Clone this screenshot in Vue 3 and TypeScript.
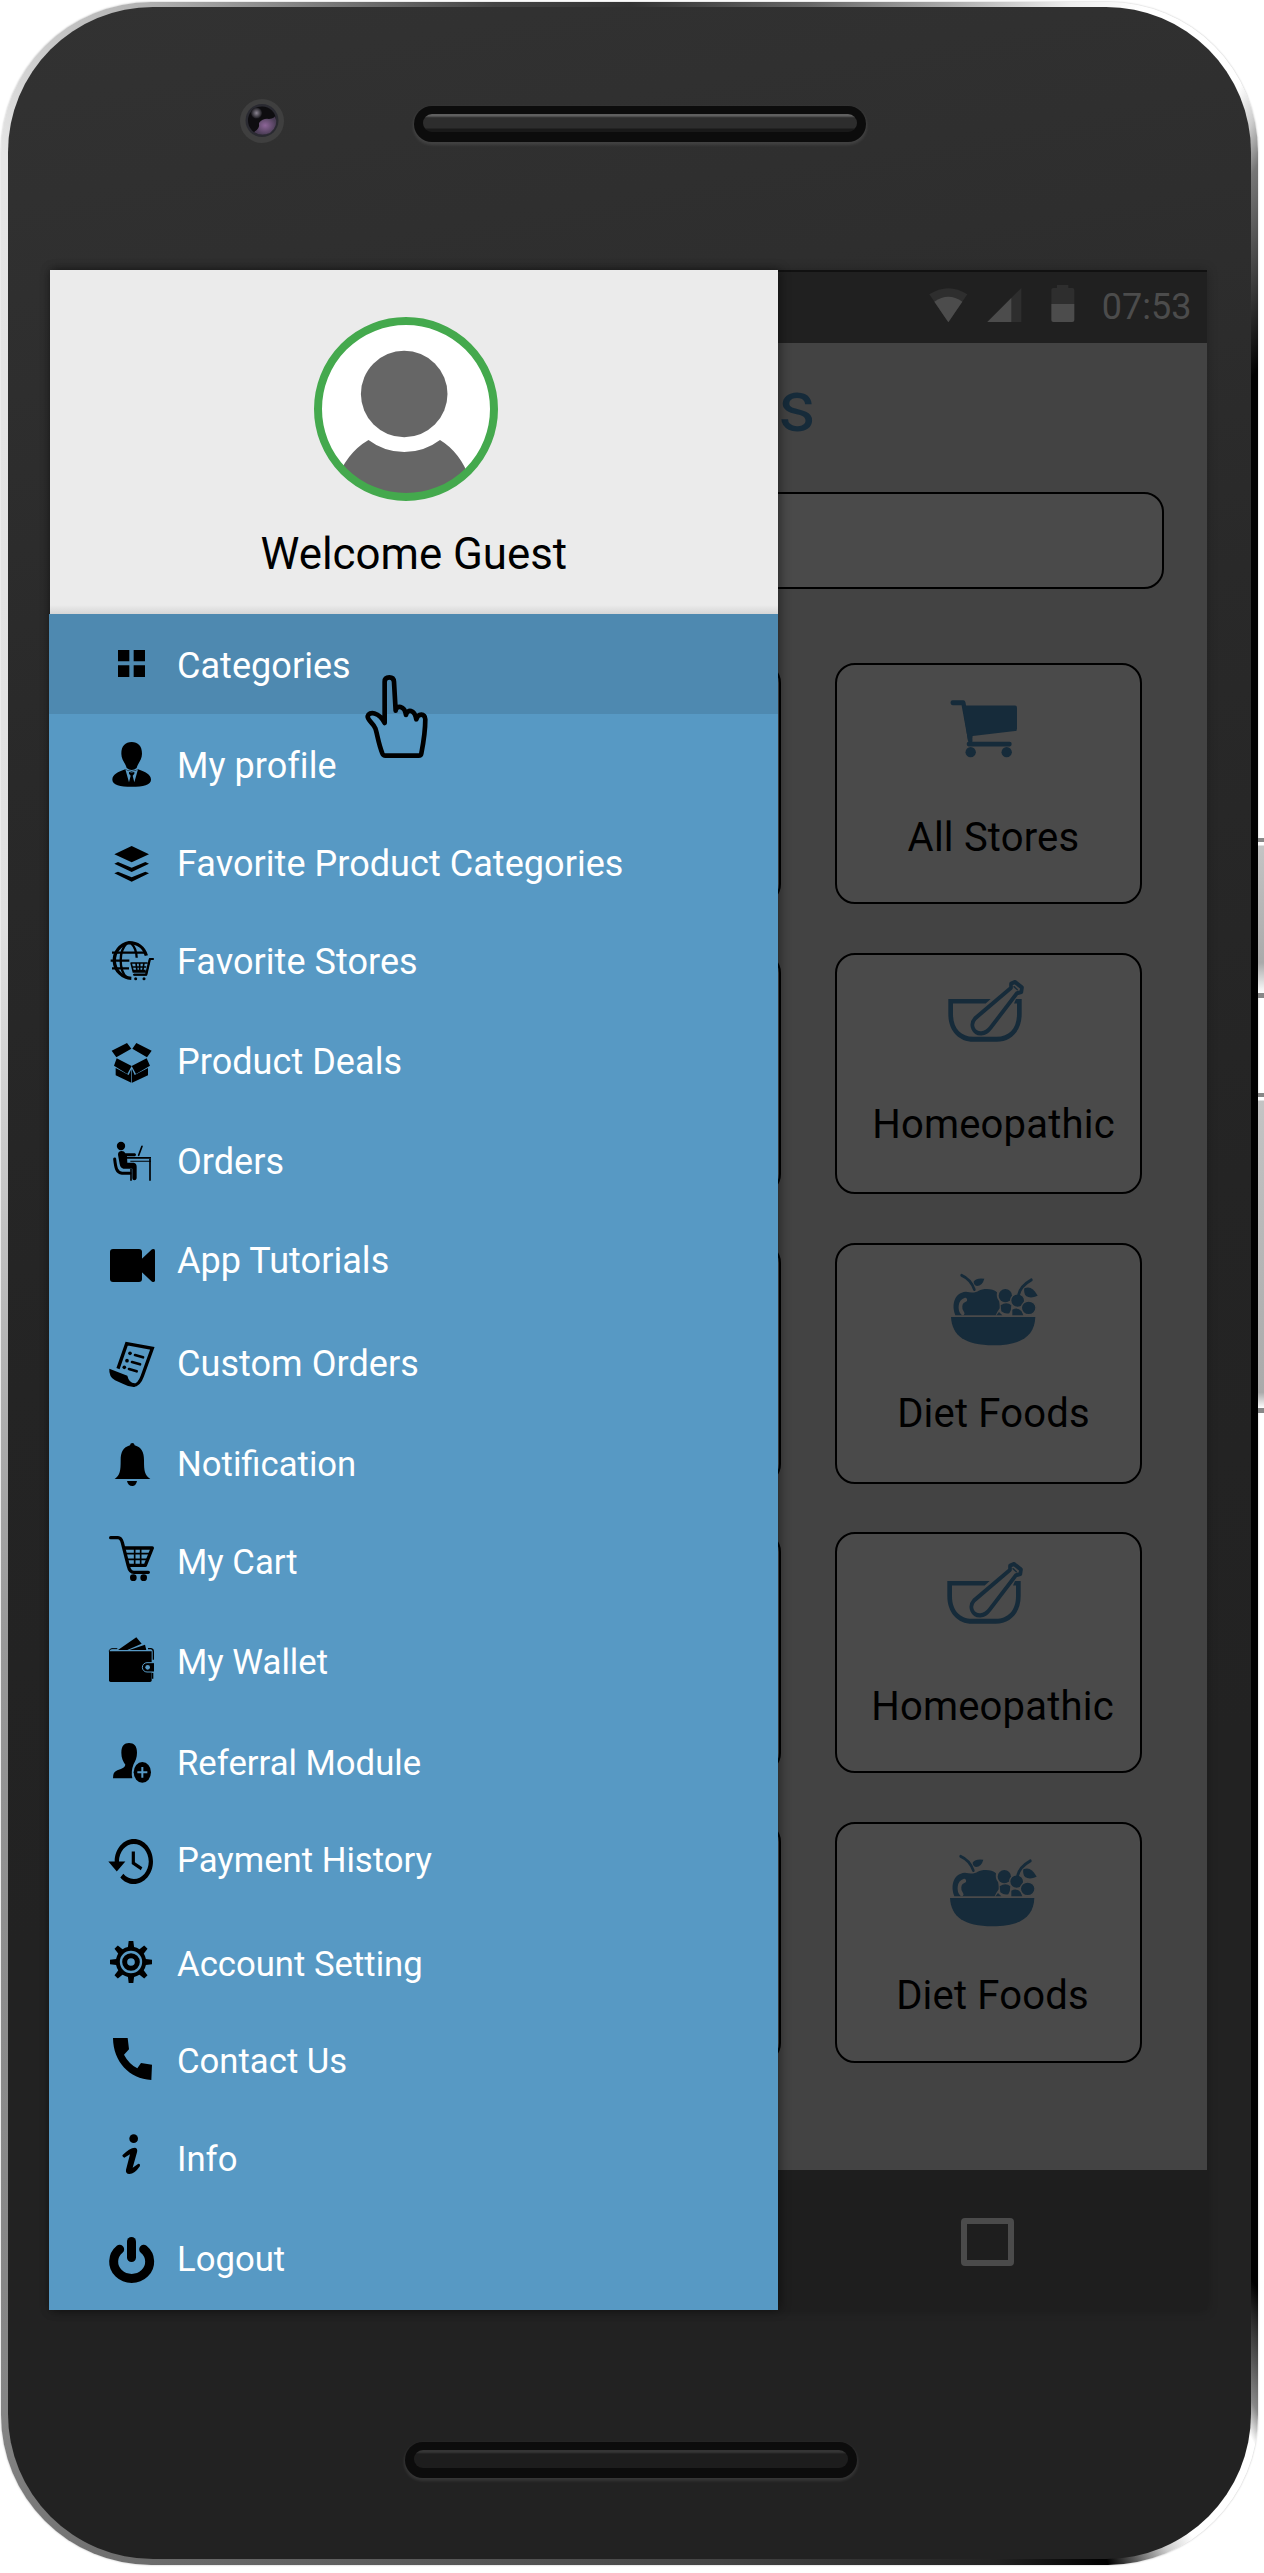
<script setup lang="ts">
interface MenuItem {
  label: string
  icon: string
  height: number
  top: number
}

interface StoreCard {
  label: string
  icon: 'cart' | 'mortar' | 'fruit'
  viewBox: string
  iconTop: number
  iconLeft: number
  textTop: number
}

// `top` is the origin of each icon's own drawing area, `height` the row height
const menu: MenuItem[] = [
  { label: 'Categories', icon: 'grid', height: 100, top: 12 },
  { label: 'My profile', icon: 'profile', height: 98, top: 312 },
  { label: 'Favorite Product Categories', icon: 'layers', height: 98, top: 606 },
  { label: 'Favorite Stores', icon: 'globe', height: 100, top: 900 },
  { label: 'Product Deals', icon: 'box', height: 100, top: 0 },
  { label: 'Orders', icon: 'desk', height: 99, top: 300 },
  { label: 'App Tutorials', icon: 'video', height: 103, top: 597 },
  { label: 'Custom Orders', icon: 'scroll', height: 99, top: 906 },
  { label: 'Notification', icon: 'bell', height: 98, top: 3 },
  { label: 'My Cart', icon: 'cart', height: 100, top: 297 },
  { label: 'My Wallet', icon: 'wallet', height: 101, top: 597 },
  { label: 'Referral Module', icon: 'referral', height: 97, top: 900 },
  { label: 'Payment History', icon: 'history', height: 104, top: -159 },
  { label: 'Account Setting', icon: 'gear', height: 97, top: 153 },
  { label: 'Contact Us', icon: 'phone', height: 98, top: 444 },
  { label: 'Info', icon: 'info', height: 100, top: 738 },
  { label: 'Logout', icon: 'power', height: 104, top: 1038 },
]

const cards: StoreCard[] = [
  { label: 'All Stores', icon: 'cart', viewBox: '540 125.4 300 235.2', iconTop: 23, iconLeft: 103, textTop: 36 },
  { label: 'Homeopathic', icon: 'mortar', viewBox: '540 883.3 300 235.2', iconTop: 23, iconLeft: 103, textTop: 33 },
  { label: 'Diet Foods', icon: 'fruit', viewBox: '540 122.8 300 235.2', iconTop: 23, iconLeft: 103, textTop: 32 },
  { label: 'Homeopathic', icon: 'mortar', viewBox: '540 883.3 300 235.2', iconTop: 25.5, iconLeft: 102, textTop: 33 },
  { label: 'Diet Foods', icon: 'fruit', viewBox: '540 122.8 300 235.2', iconTop: 25, iconLeft: 102, textTop: 33 },
]

const gearTeeth = [0, 45, 90, 135, 180, 225, 270, 315]
</script>

<template>
  <div class="stage">
    <div class="frame">
      <div class="body">
        <div class="bezel-top">
          <svg class="camera" viewBox="0 0 46 46">
            <defs>
              <radialGradient id="lensPurple"><stop offset="0" stop-color="#8d6598" /><stop offset="1" stop-color="#4a3d55" /></radialGradient>
              <radialGradient id="lensShine"><stop offset="0" stop-color="#8b8592" /><stop offset="1" stop-color="#1b1a1f" /></radialGradient>
            </defs>
            <circle cx="23" cy="23" r="22" fill="#3f3f3f" />
            <circle cx="23" cy="22.500" r="16.500" fill="#2a2a31" />
            <circle cx="23" cy="22.500" r="14" fill="#0e0d10" />
            <path d="M15 34Q21 31 20 25Q24 20 30 21Q36 20 36 18Q40 28 31 35Q22 39 15 34Z" fill="url(#lensPurple)" />
            <circle cx="17.500" cy="15" r="5.500" fill="url(#lensShine)" />
          </svg>
          <div class="speaker upper"><i /></div>
        </div>

        <div class="screen">
          <header class="status">
            <svg class="status-icons" viewBox="500 60 450 140">
              <path d="M507 103Q564 66 621 103L564 187Z" fill="#2e2e2e" />
              <path d="M522 125Q564 96 606 125L564 187Z" fill="#4c4c4c" />
              <path d="M783 84V186H681Z" fill="#2e2e2e" />
              <path d="M753 114V186H681Z" fill="#4c4c4c" />
              <path d="M890 75H924V84H936Q942 84 942 90V132H873V90Q873 84 879 84H890Z" fill="#2e2e2e" />
              <path d="M873 132H942V180Q942 186 936 186H879Q873 186 873 180Z" fill="#4c4c4c" />
            </svg>
            <span class="clock">07:53</span>
          </header>

          <main class="page">
            <h1 class="title">s</h1>
            <div class="search" />
            <div class="rows">
              <div v-for="(card, i) in cards" :key="i" class="card-row">
                <div class="card" />
                <div class="card">
                  <svg
                    class="card-icon"
                    :viewBox="card.viewBox"
                    preserveAspectRatio="none"
                    :style="{ marginTop: card.iconTop + 'px', marginLeft: card.iconLeft + 'px' }"
                  >
                    <g v-if="card.icon === 'cart'">
                      <path d="M578 164H610L631 264" class="ln" stroke-width="13" />
                      <path d="M608 171H765Q771 171 771 177V231Q771 238 765 238L638 251L636 264H624Z" />
                      <path d="M626 272H749" class="ln" stroke-width="12" />
                      <ellipse cx="632" cy="293" rx="15.500" ry="13.500" />
                      <ellipse cx="740" cy="293" rx="15.500" ry="13.500" />
                    </g>
                    <g v-else-if="card.icon === 'mortar'">
                      <path d="M565 938H692L677 950H579V978C579 1014 602 1037 640 1037H710C748 1037 771 1014 771 978V950H762L768 938H785V978C785 1020 755 1050 710 1050H640C595 1050 565 1020 565 978Z" />
                      <path d="M753 909L645 989C628 1006 641 1029 664 1028Q680 1027 692 1013L771 923L784 920L786 908L765 894L753 898Z" class="ln" stroke-width="11" />
                      <path d="M762 906L772 914" class="ln" stroke-width="4" />
                    </g>
                    <g v-else>
                      <path d="M573 251H826C824 300 785 325 700 325C615 325 576 300 573 251Z" />
                      <path d="M586 246C575 222 580 188 618 185C638 189 650 186 656 182C671 175 699 176 711 186Q708 200 717 209Q719 214 719 228Q711 238 707 246Z" />
                      <path d="M616 206C598 211 598 232 608 241" fill="none" stroke="#4a4a4a" stroke-width="11" stroke-linecap="round" />
                      <path d="M605 142Q632 152 643 179" class="ln" stroke-width="8" />
                      <path d="M641 158Q650 148 673 151Q667 170 651 170Q641 168 641 158Z" />
                      <path d="M709 246L717 238L727 246Z" />
                      <path d="M722 220Q740 210 754 220Q754 233 748 241Q736 244 724 236Z" />
                      <path d="M757 246L757 232Q772 224 785 236L790 246Z" />
                      <ellipse cx="736" cy="195" rx="20" ry="17" />
                      <ellipse cx="773" cy="208" rx="21" ry="18" stroke="#4a4a4a" stroke-width="4" />
                      <ellipse cx="806" cy="227" rx="22" ry="18" stroke="#4a4a4a" stroke-width="4" />
                      <path d="M776 192Q782 170 814 154" class="ln" stroke-width="8" />
                      <path d="M793 176Q815 166 833 195Q812 204 798 196Q790 188 793 176Z" />
                    </g>
                  </svg>
                  <div class="card-label" :style="{ marginTop: card.textTop + 'px', marginLeft: (card.iconLeft - 103) * 2 + 'px' }">{{ card.label }}</div>
                </div>
              </div>
            </div>
          </main>

          <nav class="navbar"><div class="recent" /></nav>

          <aside class="drawer">
            <div class="profile">
              <svg class="avatar" viewBox="0 0 184 184">
                <defs>
                  <clipPath id="face"><circle cx="92" cy="92" r="85" /></clipPath>
                </defs>
                <circle cx="92" cy="92" r="88" fill="#fff" />
                <g clip-path="url(#face)" fill="#666">
                  <path d="M22 184V165Q32 136 54.500 123A59 59 0 0 0 126 123Q146 135 156 162V184Z" />
                  <ellipse cx="90.200" cy="77" rx="43.300" ry="43.300" />
                </g>
                <circle cx="92" cy="92" r="88" fill="none" stroke="#44a94d" stroke-width="8" />
              </svg>
              <div class="welcome">Welcome Guest</div>
            </div>

            <ul class="menu">
              <li
                v-for="(item, i) in menu"
                :key="item.label"
                class="item"
                :class="{ active: i === 0, compact: i >= 8 }"
                :style="{ height: item.height + 'px' }"
              >
                <svg class="icon" :viewBox="`30 ${item.top} 180 291`">
                  <g v-if="item.icon === 'grid'">
                    <path d="M84 120H118V154H84ZM131 120H165V154H131ZM84 166H118V201H84ZM131 166H165V201H131Z" />
                  </g>
                  <g v-else-if="item.icon === 'profile'">
                    <path d="M125 396C144 396 156 408 156 431C156 450 143 460 140 474Q133 480 125 480Q117 480 110 474C107 460 94 450 94 431C94 408 106 396 125 396Z" />
                    <path d="M106 478Q125 488 144 478C166 485 183 494 183 509C183 525 160 530 125 530C90 530 67 525 67 509C67 494 84 485 106 478Z" />
                    <path d="M106 478L117 517L122 497L117 491V485ZM144 478L133 517L128 497L133 491V485Z" class="bg" />
                    <path d="M110 483Q125 489 140 483" class="cut" stroke-width="3" />
                  </g>
                  <g v-else-if="item.icon === 'layers'">
                    <path d="M73 733L125 708L177 733L125 757ZM73 761L84 756L125 773L166 756L177 761L125 786ZM73 790L84 785L125 802L166 785L177 790L125 815Z" />
                  </g>
                  <g v-else-if="item.icon === 'globe'">
                    <path d="M169 1037C162 1012 142 998 117 998A54 54 0 0 0 124 1105" class="st" stroke-width="10" />
                    <path d="M110 1000C86 1024 86 1078 110 1103M124 1000Q139 1015 140 1043M66 1028H164M62 1052H118M66 1075H117" class="st" stroke-width="7" />
                    <path d="M190 1047H179L168 1094H132M122 1059H173M125 1071H169M128 1082H167M123 1058L130 1086H170M138 1058L141 1084M149 1058V1084M162 1058L158 1084" class="st" stroke-width="5" />
                    <path d="M189 1047H180L169 1094H132" class="ln" stroke-width="6" />
                    <circle cx="137" cy="1106" r="4.500" /><circle cx="162" cy="1106" r="4.500" />
                  </g>
                  <g v-else-if="item.icon === 'box'">
                    <path d="M65 122L111 99L124 116L79 142ZM185 122L139 99L127 116L171 142ZM80 145L125 168L112 192L72 167ZM170 145L125 168L138 192L180 167Z" />
                    <path d="M77 174L116 195L124 177V218L77 196ZM174 174L134 195L126 177V218L174 196Z" />
                  </g>
                  <g v-else-if="item.icon === 'desk'">
                    <circle cx="93" cy="408" r="12.500" />
                    <path d="M84 434Q84 423 95 423Q103 423 106 430H135Q141 434 135 439H111L112 458H131Q140 460 140 470V505Q139 511 133 511Q127 511 127 505V476H100Q91 474 89 462Z" />
                    <path d="M74 447C77 475 80 488 96 490H120" class="ln" stroke-width="9" />
                    <path d="M123 477V512M180 446V512" class="st" stroke-width="5" />
                    <path d="M156 409L146 436" class="ln" stroke-width="5" />
                    <path d="M110 441H183V446H110ZM121 452H183V455H121Z" />
                  </g>
                  <g v-else-if="item.icon === 'video'">
                    <rect x="60" y="717" width="96" height="99" rx="9" />
                    <path d="M154 748L186 718Q195 714 195 722V811Q195 819 186 815L154 785Z" />
                  </g>
                  <g v-else-if="item.icon === 'scroll'">
                    <path d="M84 1076L110 1001L187 1015L157 1098Q147 1126 130 1126" class="st" stroke-width="10" />
                    <path d="M58 1076L112 1097Q117 1119 134 1120L134 1131Q118 1132 100 1122L75 1111Q56 1100 58 1076Z" />
                    <circle cx="120" cy="1030" r="5.500" /><circle cx="111" cy="1052" r="5.500" /><circle cx="103" cy="1072" r="5.500" />
                    <path d="M135 1035L159 1042M126 1056L150 1063M117 1077L140 1084" class="ln" stroke-width="8" />
                  </g>
                  <g v-else-if="item.icon === 'bell'">
                    <path d="M127 99Q133 99 134 106C155 112 162 128 162 150C162 185 164 195 181 207H74C90 195 92 185 92 150C92 128 99 112 120 106Q121 99 127 99ZM111 213H141Q138 228 127 228Q114 228 111 213Z" />
                  </g>
                  <g v-else-if="item.icon === 'cart'">
                    <path d="M62 383H84Q93 383 97 398L115 468Q119 487 132 487H175" class="ln" stroke-width="10" />
                    <path d="M102 414H187L166 466H116" class="st" stroke-width="10" stroke-linejoin="round" />
                    <path d="M134 414V466M152 414V466M106 431H180M111 448H172" class="st" stroke-width="5" />
                    <circle cx="130" cy="503" r="10" /><circle cx="161" cy="503" r="10" />
                  </g>
                  <g v-else-if="item.icon === 'wallet'">
                    <path d="M57 724H185V811Q185 816 180 816H62Q57 816 57 811Z" />
                    <path d="M58 725V722Q60 716 66 716H82" class="st" stroke-width="3" />
                    <path d="M84 720L139 682L155 701L112 720ZM118 720L165 704L169 720Z" />
                    <path d="M174 716H183Q190 717 190 725V749M188 788V806" class="st" stroke-width="4" />
                    <path d="M192 758H171A14 14 0 0 0 171 786H192" fill="#000" stroke="#5799c4" stroke-width="3" />
                    <circle cx="173" cy="772" r="7" class="bg" />
                  </g>
                  <g v-else-if="item.icon === 'referral'">
                    <path d="M117 999C132 999 141 1007 141 1028C141 1043 136 1053 131 1062Q122 1085 127 1105H69Q68 1086 82 1081Q106 1073 106 1064C99 1054 94 1044 94 1028C94 1007 103 999 117 999Z" />
                    <ellipse cx="157" cy="1087" rx="26" ry="31" />
                    <path d="M142 1087H172M157 1071V1103" class="cut" stroke-width="6" />
                  </g>
                  <g v-else-if="item.icon === 'history'" transform="translate(48.620 -85.500) scale(6.380 7.500)">
                    <path d="M13 3c-4.970 0-9 4.030-9 9H1l3.890 3.890.07.14L9 12H6c0-3.870 3.130-7 7-7s7 3.130 7 7-3.130 7-7 7c-1.930 0-3.680-.79-4.940-2.060l-1.420 1.420C8.270 19.990 10.510 21 13 21c4.970 0 9-4.030 9-9s-4.030-9-9-9zm-1 5v5l4.280 2.540.72-1.210-3.500-2.080V8H12z" />
                  </g>
                  <g v-else-if="item.icon === 'gear'">
                    <path v-for="a in gearTeeth" :key="a" d="M113 268L116 243H130L133 268Z" :transform="`rotate(${a} 123 306)`" />
                    <circle cx="123" cy="306" r="39.500" class="st" stroke-width="12" />
                    <circle cx="123" cy="306" r="19" class="st" stroke-width="15" />
                  </g>
                  <g v-else-if="item.icon === 'phone'">
                    <path d="M69 534H113L117 568L102 584Q116 611 142 625L153 609L186 614L184 660C118 656 70 606 69 534Z" />
                  </g>
                  <g v-else-if="item.icon === 'info'">
                    <circle cx="131" cy="836" r="13" />
                    <path d="M97 886Q118 864 135 863Q144 865 141 877L128 923L144 912Q151 910 150 918Q134 942 118 942Q106 941 108 929L120 883L103 893Q97 892 97 886Z" />
                  </g>
                  <g v-else>
                    <path d="M89 1168A54 50 0 1 0 161 1168" class="ln" stroke-width="27" />
                    <path d="M124.500 1144.500V1192.500" class="ln" stroke-width="27" />
                  </g>
                </svg>
                <span class="label">{{ item.label }}</span>
              </li>
            </ul>

            <svg class="pointer" viewBox="810 180 220 280">
              <path d="M884 339V215Q884 202 898 202Q911 202 912 215L917 302C919 285 944 286 948 315C952 296 974 298 979 328C984 308 1006 310 1006 328C1006 370 1000 400 994 431Q993 437 986 437H886Q880 437 877 430C865 400 862 372 856 355C849 338 832 331 833 319C837 303 867 305 884 339Z" />
            </svg>
          </aside>
        </div>

        <div class="bezel-bottom">
          <div class="speaker lower"><i /></div>
        </div>
      </div>
    </div>
    <div class="side">
      <div class="key power" />
      <div class="key volume" />
    </div>
  </div>
</template>

<style>
html,
body {
  margin: 0;
  background: #fff;
}
</style>

<style scoped>
.stage {
  display: flex;
  width: 1264px;
  height: 2573px;
  overflow: hidden;
  background: #fff;
  font-family: Roboto, 'Liberation Sans', sans-serif;
}
.frame {
  box-sizing: border-box;
  width: 1257px;
  height: 2563px;
  margin: 2px 0 0 1px;
  padding: 5px 7px 6px;
  border-radius: 150px;
  box-shadow: 0 0 2px rgba(0, 0, 0, 0.3);
  background: conic-gradient(
    #333 0deg, #666 8deg, #aaa 14deg, #eee 19deg, #fff 22deg, #fff 27deg, #ccc 28.2deg, #777 29.300deg,
    #444 31.600deg, #000 34.500deg, #000 148deg, #555 149.900deg, #888 150.900deg, #fff 151.700deg,
    #fff 155.800deg, #ccc 157deg, #000 159.500deg, #222 164deg, #444 176deg, #6a6a6a 200deg,
    #7a7a7a 206deg, #858585 209deg, #999 240deg, #bbb 270deg, #e0e0e0 300deg, #e5e5e5 331deg,
    #c8c8c8 335deg, #b0b0b0 339.500deg, #777 347deg, #444 354deg, #333 360deg
  );
}
.body {
  display: flex;
  flex-direction: column;
  width: 1243px;
  height: 2552px;
  border-radius: 145px;
  background: linear-gradient(170deg, #323232 0%, #2e2e2e 14%, #292929 28%, #242424 50%, #222 70%);
}
.bezel-top {
  display: flex;
  height: 263px;
}
.camera {
  width: 46px;
  height: 46px;
  margin: 91px 0 0 231px;
}
.speaker {
  box-sizing: border-box;
  width: 452px;
  height: 36px;
  padding: 8px 9px 10px;
  border-radius: 18px;
  background: #0c0c0c;
  box-shadow: 0 2px 3px 1px rgba(255, 255, 255, 0.09);
}
.speaker i {
  display: block;
  height: 18px;
  border-radius: 9px;
  background: linear-gradient(#5f5f5f 0 2px, #3d3d3d 3px, #2d2d2d 4px 14px, #191919 15px);
}
.speaker.upper {
  margin: 99px 0 0 129px;
}
.speaker.lower {
  margin: 132px 0 0 397px;
}
.speaker.lower i {
  background: linear-gradient(#353535 0 2px, #1d1d1d 4px);
}
.screen {
  position: relative;
  display: flex;
  flex-direction: column;
  width: 1157px;
  height: 2040px;
  margin-left: 42px;
  box-shadow: 0 0 10px rgba(0, 0, 0, 0.25);
}
.status {
  box-sizing: border-box;
  display: flex;
  justify-content: flex-end;
  height: 73px;
  padding-right: 15.500px;
  border-top: 2px solid #111;
  background: #202020;
}
.status-icons {
  width: 150px;
  height: 46.700px;
  margin: 8px 25px 0 0;
}
.clock {
  margin-top: 13px;
  font-size: 36px;
  line-height: 44px;
  color: #4c4c4c;
}
.page {
  height: 1827px;
  background: #434343;
}
.title {
  margin: 0;
  padding: 20px 0 0 728px;
  font-size: 73px;
  font-weight: 400;
  line-height: 86px;
  height: 43px;
  color: #162b3a;
}
.search {
  box-sizing: border-box;
  width: 1069px;
  height: 97px;
  margin: 86px 0 0 45px;
  border: 2px solid #000;
  border-radius: 20px;
  background: #4a4a4a;
}
.rows {
  display: flex;
  flex-direction: column;
  gap: 48.800px;
  margin: 74px 0 0 424px;
}
.card-row {
  display: flex;
  gap: 54px;
}
.card {
  box-sizing: border-box;
  width: 307px;
  height: 241px;
  border: 2px solid #000;
  border-radius: 20px;
  background: #4a4a4a;
}
.card-icon {
  display: block;
  width: 100px;
  height: 90px;
  fill: #162b3a;
}
.card-icon .ln {
  stroke: #162b3a;
}
.card-label {
  padding-left: 10px;
  font-size: 40px;
  letter-spacing: 0.200px;
  line-height: 47px;
  text-align: center;
  color: #000;
}
.navbar {
  display: flex;
  height: 140px;
  background: #1e1e1e;
}
.recent {
  box-sizing: border-box;
  width: 53px;
  height: 48px;
  margin: 48px 0 0 911px;
  border: 6px solid #4b4b4b;
  border-radius: 4px;
}
.drawer {
  position: absolute;
  top: 0;
  left: 0;
  width: 728px;
  height: 2040px;
  box-shadow: 2px 0 10px rgba(0, 0, 0, 0.45);
}
.profile {
  box-sizing: border-box;
  display: flex;
  flex-direction: column;
  height: 344px;
  padding-top: 47px;
  background: linear-gradient(#ebebeb 0 335px, #d6d6d6 344px);
}
.avatar {
  width: 184px;
  height: 184px;
  margin-left: 264px;
}
.welcome {
  margin: 26.500px 0 0 210.500px;
  font-size: 43.800px;
  line-height: 52px;
  color: #000;
}
.menu {
  margin: 0 0 0 -1px;
  padding: 0;
  list-style: none;
  background: #5799c4;
}
.item {
  display: flex;
  align-items: flex-start;
}
.item.active {
  background: #4e89b0;
}
.icon {
  width: 60px;
  height: 97px;
  margin-left: 51px;
  fill: #000;
}
.ln {
  fill: none;
  stroke: #000;
  stroke-linecap: round;
  stroke-linejoin: round;
}
.st {
  fill: none;
  stroke: #000;
}
.cut {
  fill: none;
  stroke: #5799c4;
}
.bg {
  fill: #5799c4;
}
.label {
  margin: 31px 0 0 17px;
  font-size: 36px;
  letter-spacing: 0.050px;
  line-height: 42px;
  white-space: nowrap;
  color: #fff;
}
.compact .label {
  margin-top: 31.500px;
  font-size: 34.700px;
  letter-spacing: 0;
}
.pointer {
  position: absolute;
  top: 400px;
  left: 310px;
  width: 73.300px;
  height: 93.300px;
  fill: none;
  stroke: #000;
  stroke-width: 14;
  stroke-linejoin: round;
}
.side {
  width: 6px;
  padding-top: 838px;
}
.key {
  box-sizing: border-box;
  border-top: 4px solid #888;
  border-bottom: 5px solid #888;
}
.power {
  height: 160px;
  background: linear-gradient(#fff 0 3px, #c4c4c4 4px, #aaa 80%, #fff);
}
.volume {
  height: 320px;
  margin-top: 95px;
  background: linear-gradient(#fff 0 3px, #c4c4c4 4px, #aaa 95%, #fff);
}
</style>
